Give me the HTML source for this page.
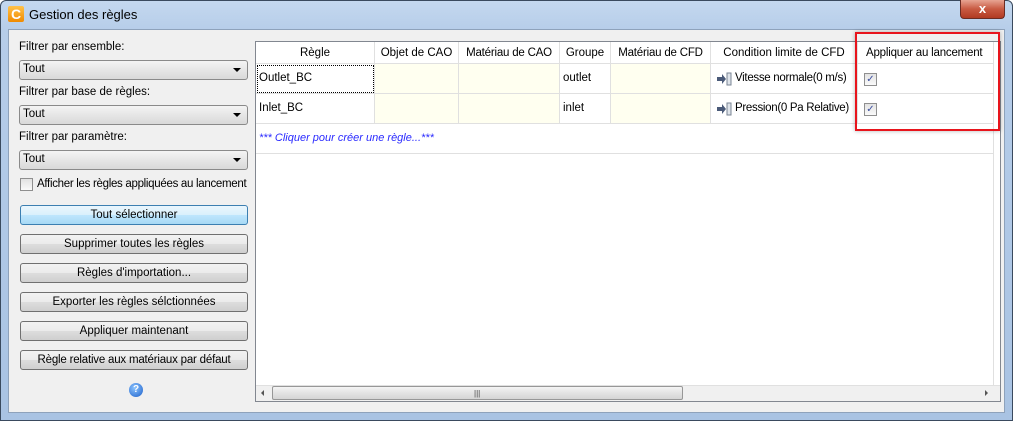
<!DOCTYPE html><html><head><style>
*{box-sizing:border-box;margin:0;padding:0}
body{width:1013px;height:421px;overflow:hidden;background:#fff;font-family:"Liberation Sans",sans-serif;font-size:11.5px;color:#000;position:relative}
.frame{position:absolute;left:0;top:0;width:1013px;height:421px;border:1px solid #3a4a5e;border-radius:6px 6px 0 0;background:linear-gradient(180deg,#c4d8ef 0,#b6cde9 30px,#a9c3e3 100%)}
.title{position:absolute;left:29px;top:7px;font-size:13px}
.close{position:absolute;left:960px;top:0;width:45px;height:19px;border:1px solid #6b2c23;border-top:none;border-radius:0 0 4px 4px;background:linear-gradient(#e7a493,#c85a42 50%,#b13a22);color:#fff;text-align:center;font-weight:bold;font-size:13px;line-height:18px}
.client{position:absolute;left:8px;top:29px;width:997px;height:384px;background:#f0f0f0;border:1px solid #8ea2bb}
.a{position:absolute}
.lbl{position:absolute;left:19px;white-space:nowrap}
.combo{position:absolute;left:19px;width:229px;height:20px;border:1px solid #8a8a8a;border-radius:3px;background:linear-gradient(#f4f4f4,#e6e6e6 50%,#d9d9d9);padding:2px 0 0 3px}
.combo:after{content:"";position:absolute;right:6px;top:7px;border-left:4px solid transparent;border-right:4px solid transparent;border-top:4px solid #000}
.btn{position:absolute;left:20px;width:228px;height:20px;border:1px solid #707070;border-radius:3px;background:linear-gradient(#f2f2f2,#ebebeb 50%,#dddddd 51%,#cfcfcf);text-align:center;line-height:18px;white-space:nowrap}
.grid{position:absolute;left:255px;top:41px;width:746px;height:361px;background:#fff;border:1px solid #828790;overflow:hidden}
.cell{position:absolute;height:30px;border-right:1px solid #e0e0e0;border-bottom:1px solid #e0e0e0;line-height:29px;padding-left:3px;white-space:nowrap;overflow:hidden}
.hd{position:absolute;top:0;height:22px;border-right:1px solid #e0e0e0;border-bottom:1px solid #e0e0e0;text-align:center;line-height:22px;background:#fff;white-space:nowrap;overflow:hidden}
.y{background:#fffff0}
.cb{position:absolute;width:13px;height:13px;border:1px solid #8f8f8f;background:linear-gradient(#e2e2e2,#fafafa);color:#3a4da0;font-size:10px;line-height:11px;text-align:center}
</style></head><body>
<div class="frame"></div>
<div class="a" style="left:8px;top:6px;width:16px;height:16px;background:linear-gradient(#ffc24a,#f08a00);border-radius:2px;color:#fff;font-weight:bold;font-size:14px;line-height:16px;text-align:center">C</div>
<div class="title">Gestion des règles</div>
<div class="close">x</div>
<div class="client"></div>
<div class="lbl" style="top:41px">Filtrer par ensemble:</div>
<div class="combo" style="top:60px">Tout</div>
<div class="lbl" style="top:86px">Filtrer par base de règles:</div>
<div class="combo" style="top:105px">Tout</div>
<div class="lbl" style="top:131px">Filtrer par paramètre:</div>
<div class="combo" style="top:150px">Tout</div>
<div class="cb" style="left:20px;top:178px"></div>
<div class="lbl" style="left:37px;top:178px;letter-spacing:-0.3px">Afficher les règles appliquées au lancement</div>
<div class="btn" style="top:205px;border-color:#3c7fb1;background:linear-gradient(#eaf6fd,#d9f0fc 50%,#bee6fd 51%,#a7d9f5)">Tout sélectionner</div>
<div class="btn" style="top:234px">Supprimer toutes les règles</div>
<div class="btn" style="top:263px">Règles d'importation...</div>
<div class="btn" style="top:292px">Exporter les règles sélctionnées</div>
<div class="btn" style="top:321px">Appliquer maintenant</div>
<div class="btn" style="top:350px;letter-spacing:-0.2px">Règle relative aux matériaux par défaut</div>
<div class="a" style="left:129px;top:383px;width:14px;height:14px;border-radius:50%;background:radial-gradient(circle at 40% 35%,#8cc4ff,#1c5fc9);color:#fff;font-size:10px;font-weight:bold;text-align:center;line-height:14px">?</div>
<div class="grid">
<div class="hd" style="left:0;width:119px">Règle</div>
<div class="hd" style="left:119px;width:84px">Objet de CAO</div>
<div class="hd" style="left:203px;width:101px;letter-spacing:-0.2px">Matériau de CAO</div>
<div class="hd" style="left:304px;width:51px">Groupe</div>
<div class="hd" style="left:355px;width:100px;letter-spacing:-0.2px">Matériau de CFD</div>
<div class="hd" style="left:455px;width:147px">Condition limite de CFD</div>
<div class="hd" style="left:602px;width:136px;text-align:left;padding-left:8px;letter-spacing:-0.2px">Appliquer au lancement</div>
<div class="cell" style="left:0;top:22px;width:119px;outline:1px dotted #000;outline-offset:-2px">Outlet_BC</div>
<div class="cell y" style="left:119px;top:22px;width:84px"></div>
<div class="cell y" style="left:203px;top:22px;width:101px"></div>
<div class="cell" style="left:304px;top:22px;width:51px">outlet</div>
<div class="cell y" style="left:355px;top:22px;width:100px"></div>
<div class="cell" style="left:455px;top:22px;width:147px;padding-left:24px;letter-spacing:-0.3px">Vitesse normale(0 m/s)</div>
<div class="cell" style="left:602px;top:22px;width:136px"></div>
<div class="cell" style="left:0;top:52px;width:119px">Inlet_BC</div>
<div class="cell y" style="left:119px;top:52px;width:84px"></div>
<div class="cell y" style="left:203px;top:52px;width:101px"></div>
<div class="cell" style="left:304px;top:52px;width:51px">inlet</div>
<div class="cell y" style="left:355px;top:52px;width:100px"></div>
<div class="cell" style="left:455px;top:52px;width:147px;padding-left:24px;letter-spacing:-0.3px">Pression(0 Pa Relative)</div>
<div class="cell" style="left:602px;top:52px;width:136px"></div>
<div class="cell" style="left:0;top:82px;width:738px;border-right:none;color:#2a2aff;font-style:italic;font-size:11px">*** Cliquer pour créer une règle...***</div>
<div class="a" style="left:737px;top:0;width:1px;height:343px;background:#e0e0e0"></div>
<svg class="a" style="left:460px;top:30px" width="16" height="14"><path d="M1 5h5V2l4 5-4 5V9H1z" fill="#4a5a78"/><rect x="11" y="1" width="4" height="12" fill="#dfe4ea" stroke="#7a8594"/></svg>
<svg class="a" style="left:460px;top:60px" width="16" height="14"><path d="M1 5h5V2l4 5-4 5V9H1z" fill="#4a5a78"/><rect x="11" y="1" width="4" height="12" fill="#dfe4ea" stroke="#7a8594"/></svg>
<div class="cb" style="left:608px;top:31px">✓</div>
<div class="cb" style="left:608px;top:61px">✓</div>
<div class="a" style="left:0;top:343px;width:744px;height:16px;background:#f0f0f0;border-top:1px solid #e0e0e0"></div>
<div class="a" style="left:5px;top:348px;border-top:3px solid transparent;border-bottom:3px solid transparent;border-right:3px solid #555"></div>
<div class="a" style="left:729px;top:348px;border-top:3px solid transparent;border-bottom:3px solid transparent;border-left:3px solid #555"></div>
<div class="a" style="left:16px;top:344px;width:411px;height:14px;border:1px solid #979797;border-radius:2px;background:linear-gradient(#f4f4f4,#e3e3e3 50%,#d5d5d5)"></div>
<div class="a" style="left:218px;top:347px;font-size:8px;color:#444">|||</div>
</div>
<div class="a" style="left:855px;top:32px;width:145px;height:99px;border:2px solid #e8141c;box-shadow:0 0 4px rgba(0,0,0,.3)"></div>
</body></html>
